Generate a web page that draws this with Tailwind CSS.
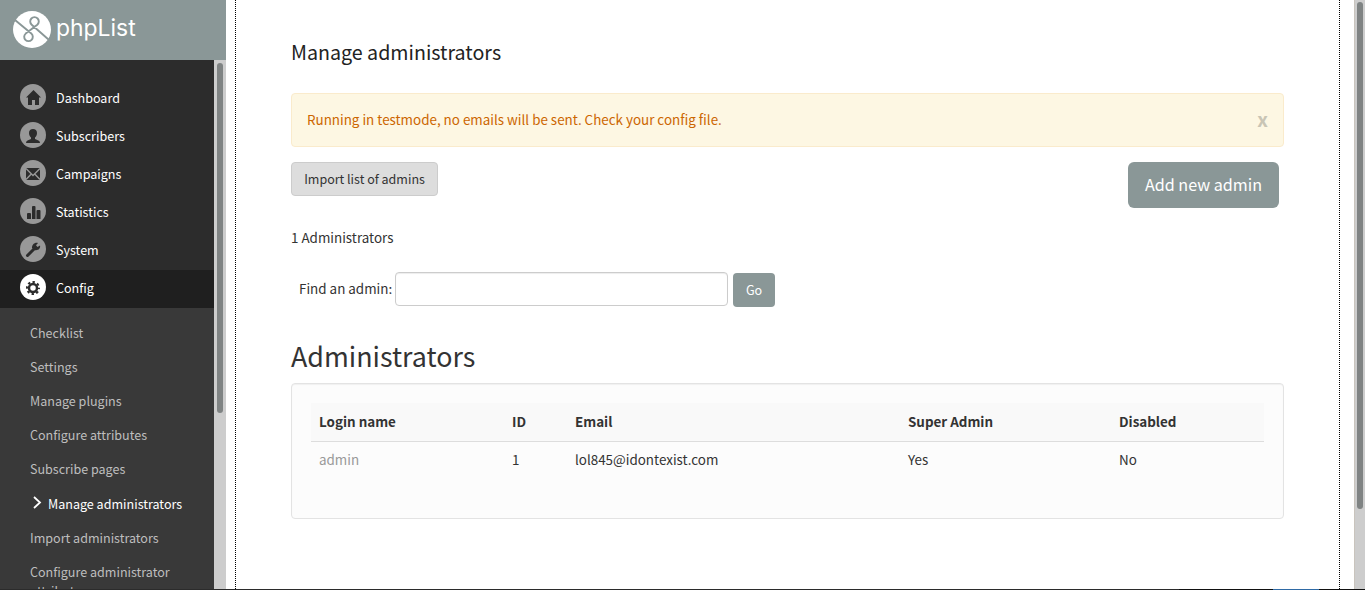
<!DOCTYPE html>
<html lang="en">
<head>
<meta charset="utf-8">
<title>phpList - Manage administrators</title>
<script src="https://cdn.jsdelivr.net/npm/@tailwindcss/browser@4"></script>
</head>
<body class="w-[1365px] h-[590px] overflow-hidden flex flex-col bg-white font-['Noto_Sans_CJK_SC',sans-serif] text-[13.42px] leading-5 text-[#333] whitespace-nowrap">
<div class="flex h-[589px] overflow-hidden">
  <aside class="w-[226px] shrink-0 flex flex-col">
    <div class="h-[60px] shrink-0 bg-[#8a9797] flex items-start pl-[13px] pt-[11px]">
      <svg class="w-[38px] h-[37px]" viewBox="0 0 38 37"><ellipse cx="19" cy="18.500" rx="19" ry="18.500" fill="#fff"/><g fill="none" stroke="#8a9797" stroke-width="1.900"><path d="M2 9L18.300 22.600A4.300 4.300 0 1 1 12.700 22.600L24.300 13.700A4.300 4.300 0 1 0 18.700 13.700L35.500 28.500"/></g></svg>
      <span class="ml-[5px] mt-[1px] font-[Inter] text-[22.9px] leading-8 text-white">phpList</span>
    </div>
    <div class="flex flex-1 min-h-0">
      <nav class="w-[214px] bg-[#393939] text-white text-[12.55px] overflow-hidden">
        <ul class="pt-5 bg-[#2c2c2c]">
          <li class="h-[38px] flex items-start pl-5 pt-1"><svg class="w-[26px] h-[26px]" viewBox="0 0 26 26"><circle cx="13" cy="13" r="13" fill="#989898"/><path fill="#2c2c2c" d="M13.500 6L21 13.500H19V21H15V16H12V21H8V13.500H6Z"/></svg><span class="ml-[10px] mt-[4px]">Dashboard</span></li>
          <li class="h-[38px] flex items-start pl-5 pt-1"><svg class="w-[26px] h-[26px]" viewBox="0 0 26 26"><circle cx="13" cy="13" r="13" fill="#989898"/><path fill="#2c2c2c" d="M13 7C15.500 7 17 8.500 17 11C17 13 16 14.500 15 15.500V17L18.500 18.500Q20 19 20 21H6Q6 19 7.500 18.500L11 17V15.500C10 14.500 9 13 9 11C9 8.500 10.500 7 13 7Z"/></svg><span class="ml-[10px] mt-[4px]">Subscribers</span></li>
          <li class="h-[38px] flex items-start pl-5 pt-1"><svg class="w-[26px] h-[26px]" viewBox="0 0 26 26"><circle cx="13" cy="13" r="13" fill="#989898"/><path fill="#2c2c2c" d="M6 8H20V20H6Z"/><path d="M6 8.500L13 15.500L20 8.500M6 19.500L11.300 14M20 19.500L14.700 14" fill="none" stroke="#989898" stroke-width="1.400"/></svg><span class="ml-[10px] mt-[4px]">Campaigns</span></li>
          <li class="h-[38px] flex items-start pl-5 pt-1"><svg class="w-[26px] h-[26px]" viewBox="0 0 26 26"><circle cx="13" cy="13" r="13" fill="#989898"/><path fill="#2c2c2c" d="M7 16Q7 15 8 15H10Q11 15 11 16V21H7ZM12 9Q12 8 13 8H14.500Q15.500 8 15.500 9V21H12ZM16.500 13Q16.500 12 17.500 12H19.500Q20.500 12 20.500 13V21H16.500Z"/></svg><span class="ml-[10px] mt-[4px]">Statistics</span></li>
          <li class="h-[38px] flex items-start pl-5 pt-1"><svg class="w-[26px] h-[26px]" viewBox="0 0 26 26"><circle cx="13" cy="13" r="13" fill="#989898"/><path d="M7.500 19.500L14.500 12.500" stroke="#2c2c2c" stroke-width="3" stroke-linecap="round"/><path fill="#2c2c2c" d="M18 7L16 9.200L17.500 11L20 9.500C20.800 12.500 18 15 14.500 14L12 12C11.800 8.500 15 6 18 7Z"/></svg><span class="ml-[10px] mt-[4px]">System</span></li>
          <li class="h-[38px] flex items-start pl-5 pt-1 bg-[#1f1f1f]"><svg class="w-[26px] h-[26px]" viewBox="0 0 26 26"><circle cx="13" cy="13" r="13" fill="#fff"/><circle cx="13" cy="14" r="4" fill="none" stroke="#2c2c2c" stroke-width="2.500"/><circle cx="13" cy="14" r="6" fill="none" stroke="#2c2c2c" stroke-width="2" stroke-dasharray="2.400 2.312" stroke-dashoffset="1.200"/></svg><span class="ml-[10px] mt-[4px]">Config</span></li>
        </ul>
        <ul class="pt-[15px] pl-[30px] flex flex-col gap-[14px] text-[#bebebe]">
          <li>Checklist</li><li>Settings</li><li>Manage plugins</li><li>Configure attributes</li><li>Subscribe pages</li>
          <li class="flex items-start text-white pt-px"><svg class="w-[18px] h-[18px]" viewBox="0 0 18 18"><path d="M4 3L10 8.500L4 14" fill="none" stroke="#fff" stroke-width="1.800"/></svg>Manage administrators</li>
          <li>Import administrators</li><li class="leading-[19px]">Configure administrator<br>attributes</li>
        </ul>
      </nav>
      <div class="w-3 bg-[#cdcdcd] pt-[3px] pl-[3px]"><div class="w-[6px] h-[350px] rounded-full bg-[#7f8383]"></div></div>
    </div>
  </aside>
  <main class="ml-[9px] w-[1105px] shrink-0 border-x border-dotted border-black pl-[55px] pr-[55px]">
    <h1 class="mt-[38px] text-[19.65px] leading-7 text-[#222]">Manage administrators</h1>
    <div class="mt-[27px] h-[54px] w-[993px] rounded border border-[#faebcc] bg-[#fdf7e3] flex items-center justify-between pl-[15px] pr-[15px] text-[#cc6600]"><span class="-mt-[2px]">Running in testmode, no emails will be sent. Check your config file.</span><b class="-mt-[2px] text-[19px] text-[#c9c5b5]">x</b></div>
    <div class="mt-[15px] w-[993px] flex items-start justify-between pr-[5px]">
      <button class="w-[147px] h-[34px] rounded border border-[#ccc] bg-[#ddd] text-[12.5px]">Import list of admins</button>
      <button class="w-[151px] h-[46px] pb-[2px] rounded-[6px] bg-[#8a9797] text-white text-[16.15px]">Add new admin</button>
    </div>
    <p class="mt-[19px]">1 Administrators</p>
    <div class="mt-[25px] pl-2 flex items-start"><label class="w-[96px] mt-[6px]">Find an admin:</label><input class="w-[333px] h-[34px] rounded border border-[#ccc] bg-white shadow-[inset_0_1px_1px_rgba(0,0,0,0.075)]"><button class="ml-[5px] mt-px w-[42px] h-[34px] rounded bg-[#8a9797] text-white text-[12.55px]">Go</button></div>
    <h2 class="mt-[29px] text-[26.85px] leading-[40px]">Administrators</h2>
    <section class="mt-[7px] w-[993px] h-[136px] rounded border border-[#e3e3e3] bg-[#fcfcfc] shadow-[inset_0_1px_1px_rgba(0,0,0,0.05)] p-[19px]">
      <div class="h-[39px] pb-[2px] bg-[#f9f9f9] border-b border-[#ddd] font-bold grid grid-cols-[193px_63px_333px_211px_1fr] items-center pl-2"><span>Login name</span><span>ID</span><span>Email</span><span>Super Admin</span><span>Disabled</span></div>
      <div class="h-[34px] grid grid-cols-[193px_63px_333px_211px_1fr] items-center pl-2"><a class="text-[#999]">admin</a><span>1</span><span>lol845@idontexist.com</span><span>Yes</span><span>No</span></div>
    </section>
  </main>
  <div class="ml-[14px] w-[11px] bg-[#cdcdcd] border-l border-[#c9c4bd] pt-[2px] pl-[2px]"><div class="w-[6px] h-[507px] rounded-full bg-[#7f8383]"></div></div>
</div>
<div class="h-px flex bg-[#111]"><div class="w-[1179px] bg-[#2b2b2b]"></div><div class="ml-[94px] w-[46px] bg-[#2f6aa5]"></div></div>
</body>
</html>
